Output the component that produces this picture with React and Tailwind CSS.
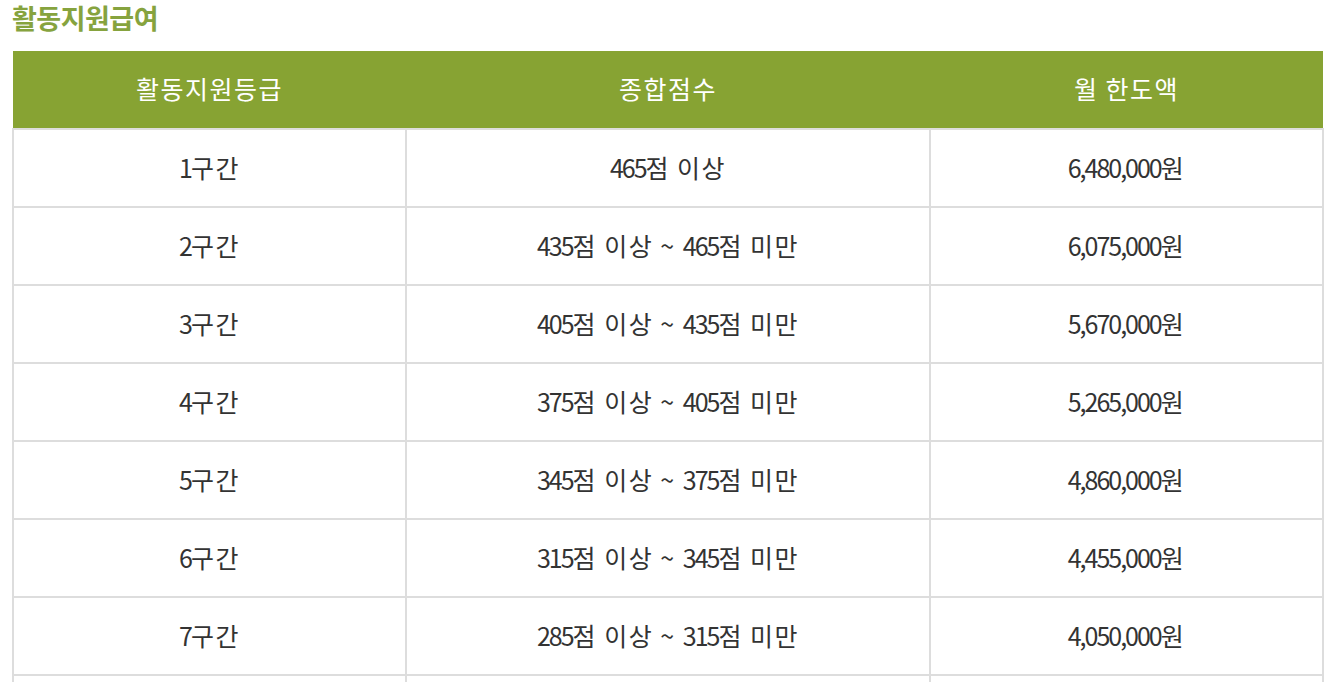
import React from 'react'

const ROWS = [
  ['1구간', '465점 이상', '6,480,000원'],
  ['2구간', '435점 이상 ~ 465점 미만', '6,075,000원'],
  ['3구간', '405점 이상 ~ 435점 미만', '5,670,000원'],
  ['4구간', '375점 이상 ~ 405점 미만', '5,265,000원'],
  ['5구간', '345점 이상 ~ 375점 미만', '4,860,000원'],
  ['6구간', '315점 이상 ~ 345점 미만', '4,455,000원'],
  ['7구간', '285점 이상 ~ 315점 미만', '4,050,000원'],
  ['8구간', '255점 이상 ~ 285점 미만', '3,645,000원'],
  ['9구간', '225점 이상 ~ 255점 미만', '3,240,000원'],
]

const FONT = { fontFamily: '"Noto Sans CJK KR", "Noto Sans", sans-serif' }

// digits in the original font are narrow, hangul is wide
function Cell({ text }) {
  const parts = text.split(/([0-9,]+)/)
  return (
    <>
      {parts.map((p, i) =>
        /^[0-9,]+$/.test(p)
          ? <span key={i} className="tracking-[-2px]">{p}</span>
          : <span key={i} className="tracking-[1.5px]">{p}</span>
      )}
    </>
  )
}

export default function App() {
  return (
    <div className="min-h-screen bg-white pl-3 pr-2" style={FONT}>
      <h2 className="pt-[3px] h-[51px] text-[27px] font-bold leading-[30px] text-[#86a33e] tracking-[-0.5px]">
        활동지원급여
      </h2>

      <table className="w-[1310px] border-collapse table-fixed">
        <colgroup>
          <col className="w-[393px]" />
          <col className="w-[524px]" />
          <col className="w-[393px]" />
        </colgroup>
        <thead>
          <tr className="bg-[#87a333] h-[78px]">
            <th className="font-normal text-white text-[25px] tracking-[1.5px] pb-[2px]">활동지원등급</th>
            <th className="font-normal text-white text-[25px] tracking-[1.5px] pb-[2px]">종합점수</th>
            <th className="font-normal text-white text-[25px] tracking-[1.5px] pb-[2px]">월 한도액</th>
          </tr>
        </thead>
        <tbody>
          {ROWS.map((r) => (
            <tr key={r[0]} className="h-[78px]">
              {r.map((c, i) => (
                <td key={i} className="border-2 border-[#dddddd] text-center text-[25px] text-[#333333]">
                  <Cell text={c} />
                </td>
              ))}
            </tr>
          ))}
        </tbody>
      </table>
    </div>
  )
}
